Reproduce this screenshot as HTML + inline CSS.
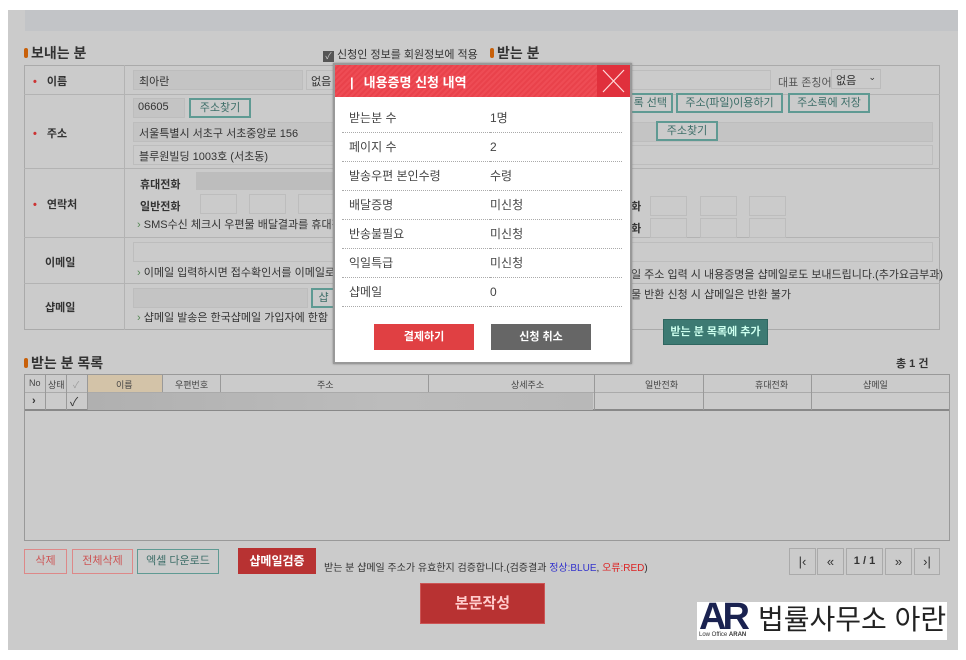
<!DOCTYPE html><html><head><meta charset="utf-8"><style>
*{margin:0;padding:0;box-sizing:border-box}
body{width:966px;height:660px;background:#fff;font-family:"Liberation Sans","Noto Sans CJK KR",sans-serif;font-size:11px;color:#333;position:relative;overflow:hidden}
.a{position:absolute}
.bg{left:8px;top:10px;width:950px;height:640px;background:#cbcbcb}
.in{background:#c4c4c4;border:1px solid #bdbdbd;height:20px}
.bt{border:2px solid #5f9a93;color:#3d6e68;text-align:center;line-height:16px;background:#cbcbcb;height:20px;font-size:11px}
.ln{background:#b3b3b3}
.t{white-space:nowrap}
h2{position:absolute;font-size:14px;font-weight:bold;color:#333}
h2:before{content:"";display:inline-block;width:4px;height:10px;background:#c8600a;border-radius:2px;margin-right:3px}
.lab{font-weight:bold;font-size:11px}
.dot{color:#c33;margin-right:10px}
.md td{height:29px;border-bottom:1px dotted #aaa;font-size:12px;color:#444}
</style></head><body>
<div class="a bg"></div>
<div class="a" style="left:25px;top:10px;width:933px;height:21px;background:#c2c4c7"></div>
<h2 style="left:24px;top:43px">보내는 분</h2>
<h2 style="left:490px;top:43px">받는 분</h2>
<div class="a t" style="left:323px;top:46px;font-size:11px"><span style="display:inline-block;width:11px;height:11px;background:#555;color:#ccc;font-size:9px;line-height:11px;text-align:center;vertical-align:-1px">✓</span> 신청인 정보를 회원정보에 적용</div>
<div class="a" style="left:24px;top:65px;width:916px;height:265px;border:1px solid #aaa"></div>
<div class="a ln" style="left:124px;top:65px;width:1px;height:265px"></div>
<div class="a ln" style="left:24px;top:94px;width:916px;height:1px"></div>
<div class="a ln" style="left:24px;top:168px;width:916px;height:1px"></div>
<div class="a ln" style="left:24px;top:237px;width:916px;height:1px"></div>
<div class="a ln" style="left:24px;top:283px;width:916px;height:1px"></div>
<div class="a t lab" style="left:33px;top:73px"><span class="dot">•</span>이름</div>
<div class="a t lab" style="left:33px;top:125px"><span class="dot">•</span>주소</div>
<div class="a t lab" style="left:33px;top:196px"><span class="dot">•</span>연락처</div>
<div class="a t lab" style="left:45px;top:254px">이메일</div>
<div class="a t lab" style="left:45px;top:299px">샵메일</div>
<div class="a in t" style="left:133px;top:70px;width:170px;padding:2px 5px">최아란</div>
<div class="a in t" style="left:306px;top:70px;width:30px;padding:2px 4px;background:#cbcbcb">없음</div>
<div class="a in t" style="left:133px;top:98px;width:52px;padding:2px 4px">06605</div>
<div class="a bt" style="left:189px;top:98px;width:62px">주소찾기</div>
<div class="a in t" style="left:133px;top:122px;width:800px;padding:2px 5px">서울특별시 서초구 서초중앙로 156</div>
<div class="a in t" style="left:133px;top:145px;width:800px;padding:2px 5px;background:#cbcbcb">블루원빌딩 1003호 (서초동)</div>
<div class="a t lab" style="left:140px;top:176px">휴대전화</div>
<div class="a" style="left:196px;top:172px;width:140px;height:18px;background:#bdbdbd"></div>
<div class="a t lab" style="left:140px;top:198px">일반전화</div>
<div class="a in" style="left:200px;top:194px;width:37px;background:#cbcbcb"></div>
<div class="a in" style="left:249px;top:194px;width:37px;background:#cbcbcb"></div>
<div class="a in" style="left:298px;top:194px;width:37px;background:#cbcbcb"></div>
<div class="a t" style="left:137px;top:216px"><span style="color:#585">›</span> SMS수신 체크시 우편물 배달결과를 휴대전</div>
<div class="a in" style="left:133px;top:242px;width:800px;background:#cbcbcb"></div>
<div class="a t" style="left:137px;top:264px"><span style="color:#585">›</span> 이메일 입력하시면 접수확인서를 이메일로 !</div>
<div class="a in" style="left:133px;top:288px;width:175px"></div>
<div class="a bt" style="left:311px;top:288px;width:25px">샵</div>
<div class="a t" style="left:137px;top:309px"><span style="color:#585">›</span> 샵메일 발송은 한국샵메일 가입자에 한함</div>
<div class="a in" style="left:631px;top:70px;width:140px;background:#cbcbcb"></div>
<div class="a t" style="left:778px;top:74px;color:#555">대표 존칭어</div>
<div class="a t" style="left:831px;top:69px;width:50px;height:20px;border:1px solid #bbb;padding:2px 4px;background:#cbcbcb">없음 <span style="float:right;font-size:9px">⌄</span></div>
<div class="a bt t" style="left:621px;top:93px;width:52px;text-align:right;padding-right:4px">록 선택</div>
<div class="a bt" style="left:676px;top:93px;width:107px">주소(파일)이용하기</div>
<div class="a bt" style="left:788px;top:93px;width:82px">주소록에 저장</div>
<div class="a bt" style="left:656px;top:121px;width:62px">주소찾기</div>
<div class="a t lab" style="left:631px;top:198px">화</div>
<div class="a t lab" style="left:631px;top:220px">화</div>
<div class="a in" style="left:650px;top:196px;width:37px;background:#cbcbcb"></div>
<div class="a in" style="left:700px;top:196px;width:37px;background:#cbcbcb"></div>
<div class="a in" style="left:749px;top:196px;width:37px;background:#cbcbcb"></div>
<div class="a in" style="left:650px;top:218px;width:37px;background:#cbcbcb"></div>
<div class="a in" style="left:700px;top:218px;width:37px;background:#cbcbcb"></div>
<div class="a in" style="left:749px;top:218px;width:37px;background:#cbcbcb"></div>
<div class="a t" style="left:631px;top:266px">일 주소 입력 시 내용증명을 샵메일로도 보내드립니다.(추가요금부과)</div>
<div class="a t" style="left:631px;top:286px">물 반환 신청 시 샵메일은 반환 불가</div>
<div class="a" style="left:663px;top:319px;width:105px;height:26px;background:#3d7a73;border:1px solid #2f6660;color:#cfe;font-weight:bold;text-align:center;line-height:24px">받는 분 목록에 추가</div>
<h2 style="left:24px;top:353px">받는 분 목록</h2>
<div class="a t" style="left:896px;top:355px;font-weight:bold">총 1 건</div>
<div class="a" style="left:24px;top:374px;width:926px;height:167px;border:1px solid #999"></div>
<div class="a" style="left:25px;top:375px;width:924px;height:36px;border-bottom:2px solid #888"></div>
<div class="a" style="left:25px;top:392px;width:924px;height:1px;background:#aaa"></div>
<div class="a" style="left:88px;top:375px;width:74px;height:17px;background:#d3c3a8"></div>
<div class="a" style="left:88px;top:393px;width:505px;height:17px;background:linear-gradient(90deg,#b0b0b0,#bcbcbc 60%,#b8b8b8)"></div>
<div class="a t" style="left:25px;top:378px;width:924px;font-size:9px;color:#444">
<span class="a" style="left:4px">No</span><span class="a" style="left:23px">상태</span><span class="a" style="left:48px;color:#999">✓</span><span class="a" style="left:91px">이름</span><span class="a" style="left:150px">우편번호</span><span class="a" style="left:292px">주소</span><span class="a" style="left:486px">상세주소</span><span class="a" style="left:620px">일반전화</span><span class="a" style="left:730px">휴대전화</span><span class="a" style="left:838px">샵메일</span></div>
<div class="a t" style="left:32px;top:395px;font-weight:bold">›</div>
<div class="a t" style="left:70px;top:393px;font-size:12px">✓</div>
<div class="a" style="left:45px;top:375px;width:1px;height:35px;background:#999"></div>
<div class="a" style="left:66px;top:375px;width:1px;height:35px;background:#999"></div>
<div class="a" style="left:87px;top:375px;width:1px;height:35px;background:#999"></div>
<div class="a" style="left:162px;top:375px;width:1px;height:17px;background:#999"></div>
<div class="a" style="left:220px;top:375px;width:1px;height:17px;background:#999"></div>
<div class="a" style="left:428px;top:375px;width:1px;height:17px;background:#999"></div>
<div class="a" style="left:594px;top:375px;width:1px;height:35px;background:#999"></div>
<div class="a" style="left:703px;top:375px;width:1px;height:35px;background:#999"></div>
<div class="a" style="left:811px;top:375px;width:1px;height:35px;background:#999"></div>
<div class="a" style="left:24px;top:549px;width:43px;height:25px;border:1px solid #d88;color:#c55;text-align:center;line-height:23px">삭제</div>
<div class="a" style="left:72px;top:549px;width:61px;height:25px;border:1px solid #d88;color:#c55;text-align:center;line-height:23px">전체삭제</div>
<div class="a" style="left:137px;top:549px;width:82px;height:25px;border:1px solid #5f9a93;color:#3d6e68;text-align:center;line-height:23px">엑셀 다운로드</div>
<div class="a" style="left:238px;top:548px;width:78px;height:26px;background:#b83232;color:#fff;font-weight:bold;text-align:center;line-height:26px;font-size:12px">샵메일검증</div>
<div class="a t" style="left:324px;top:559px;font-size:10px">받는 분 샵메일 주소가 유효한지 검증합니다.(검증결과 <span style="color:#33c">정상:BLUE</span>, <span style="color:#d22">오류:RED</span>)</div>
<div class="a" style="left:789px;top:548px;width:27px;height:27px;border:1px solid #aaa;text-align:center;line-height:25px;font-size:13px">|‹</div>
<div class="a" style="left:817px;top:548px;width:27px;height:27px;border:1px solid #aaa;text-align:center;line-height:25px;font-size:13px">«</div>
<div class="a" style="left:846px;top:548px;width:37px;height:27px;border:1px solid #aaa;text-align:center;line-height:25px;font-weight:bold">1 / 1</div>
<div class="a" style="left:885px;top:548px;width:27px;height:27px;border:1px solid #aaa;text-align:center;line-height:25px;font-size:13px">»</div>
<div class="a" style="left:914px;top:548px;width:26px;height:27px;border:1px solid #aaa;text-align:center;line-height:25px;font-size:13px">›|</div>
<div class="a" style="left:420px;top:583px;width:125px;height:41px;background:#b83232;border:1px solid #c55;color:#fcc;font-weight:bold;font-size:15px;text-align:center;line-height:39px">본문작성</div>
<div class="a" style="left:697px;top:602px;width:250px;height:38px;background:#fff"></div>
<div class="a t" style="left:699px;top:597px;font-size:38px;font-weight:bold;color:#1a2250;letter-spacing:-4px;line-height:40px">AR</div>
<div class="a t" style="left:699px;top:632px;font-size:6px;color:#333">Low Office <b>ARAN</b></div>
<div class="a t" style="left:758px;top:603px;font-size:28px;color:#222;line-height:34px">법률사무소 아란</div>
<div class="a" style="left:333px;top:63px;width:299px;height:301px;background:#fff;border:2px solid #999;box-shadow:0 0 2px #888"></div>
<div class="a" style="left:335px;top:65px;width:262px;height:32px;background:repeating-linear-gradient(135deg,#ee4c55 0 2px,#e9424b 2px 4px)"></div>
<div class="a" style="left:597px;top:65px;width:33px;height:32px;background:#e0303c"><svg width="33" height="32"><path d="M6 5L27 27M27 5L6 27" stroke="#fdd" stroke-width="1.2"/></svg></div>
<div class="a t" style="left:350px;top:72px;color:#fff;font-weight:bold;font-size:13px"><span style="margin-right:10px">|</span>내용증명 신청 내역</div>
<table class="a md" style="left:342px;top:103px;width:280px;border-collapse:collapse">
<tr><td style="width:148px;padding-left:7px">받는분 수</td><td>1명</td></tr>
<tr><td style="padding-left:7px">페이지 수</td><td>2</td></tr>
<tr><td style="padding-left:7px">발송우편 본인수령</td><td>수령</td></tr>
<tr><td style="padding-left:7px">배달증명</td><td>미신청</td></tr>
<tr><td style="padding-left:7px">반송불필요</td><td>미신청</td></tr>
<tr><td style="padding-left:7px">익일특급</td><td>미신청</td></tr>
<tr><td style="padding-left:7px">샵메일</td><td>0</td></tr>
</table>
<div class="a" style="left:374px;top:324px;width:100px;height:26px;background:#e04043;color:#fff;font-weight:bold;text-align:center;line-height:26px">결제하기</div>
<div class="a" style="left:491px;top:324px;width:100px;height:26px;background:#666;color:#fff;font-weight:bold;text-align:center;line-height:26px">신청 취소</div>
</body></html>
